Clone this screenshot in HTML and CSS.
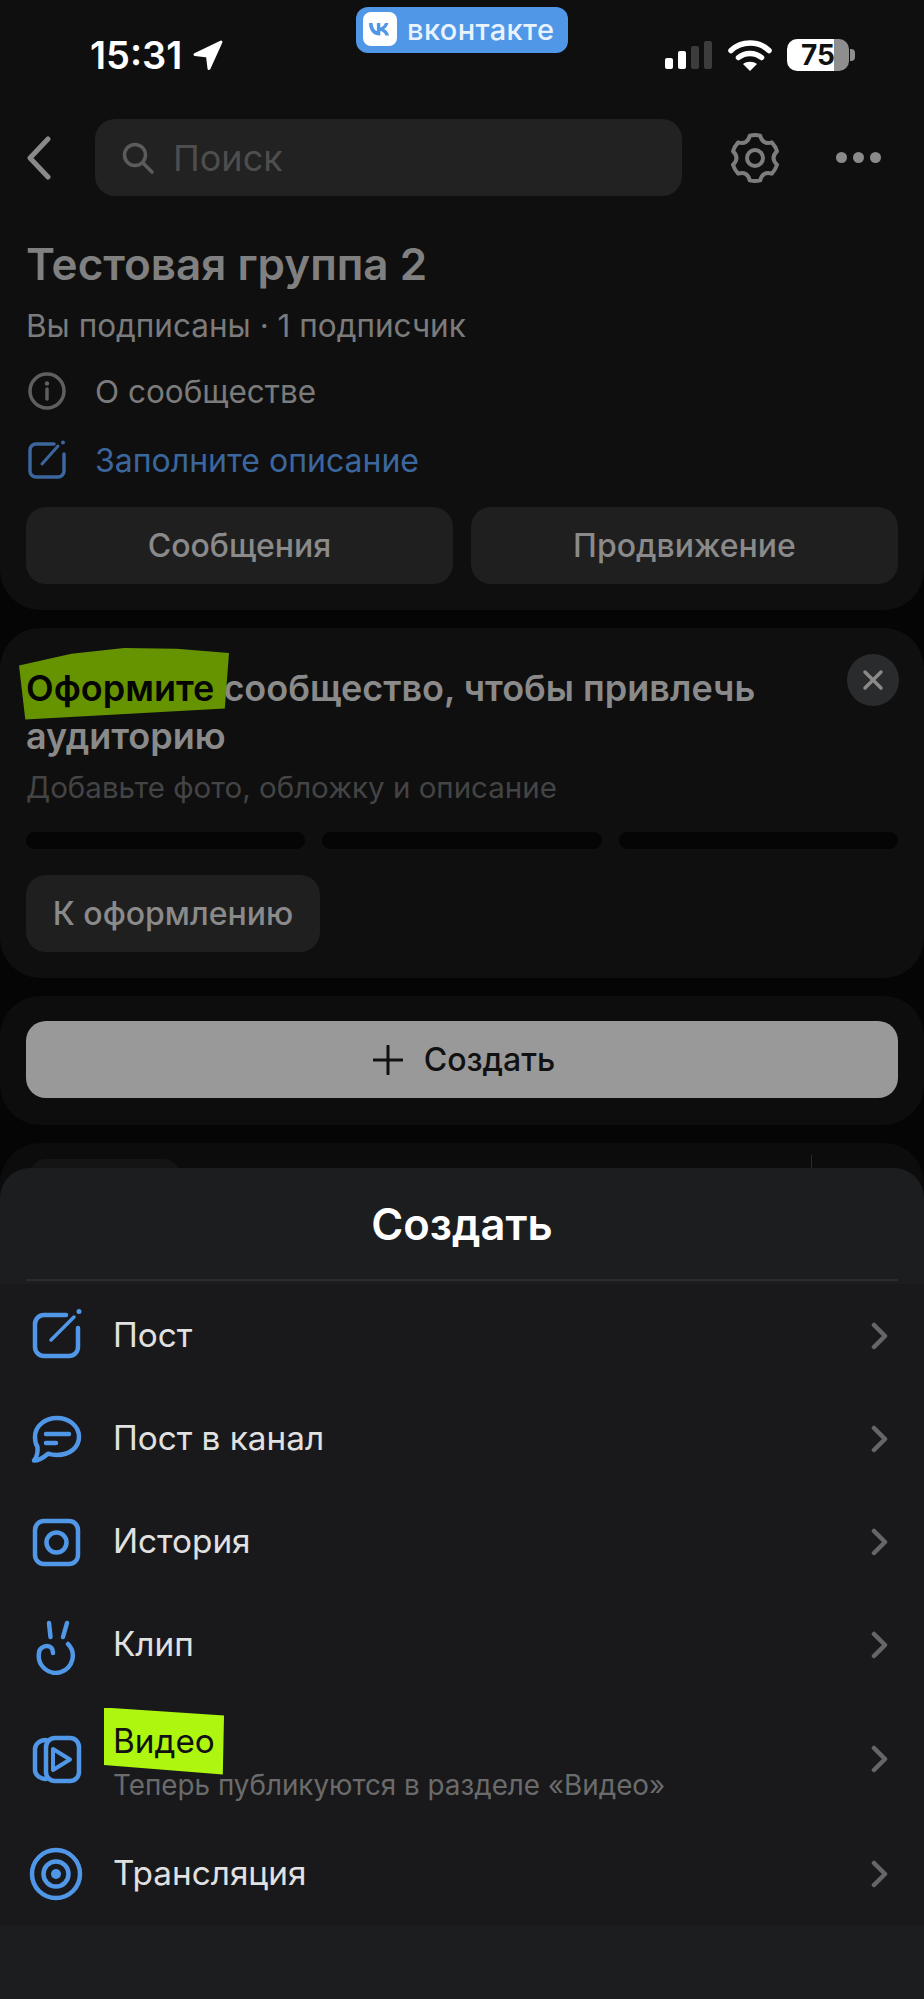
FILE: index.html
```html
<!DOCTYPE html>
<html lang="ru">

<head>
    <meta charset="UTF-8">
    <meta name="viewport" content="width=device-width, initial-scale=1.0">
    <title>Тестовая группа 2</title>
    <link rel="stylesheet" href="styles.css">
</head>

<body>
    <div class="record-badge">
        <svg class="vk-logo" viewBox="0 0 34 34">
            <rect width="34" height="34" rx="8" fill="#fff" />
            <path d="M6 11h3.6c.2 5 2.300 7.400 4.300 8V11h3.400v4.400c2-.2 4-2.300 4.700-4.400h3.400c-.6 3-2.800 5.200-4.400 6.100 1.600.8 4.100 2.700 5.100 6.400h-3.700c-.8-2.400-2.700-4.300-5.100-4.500v4.500h-.4C10.200 23.500 6.200 18.900 6 11z" fill="#5097e8" />
        </svg>
        <span>вконтакте</span>
    </div>

    <section class="card card-top">
        <div class="status-bar">
            <div class="status-time">
                <span>15:31</span>
                <svg class="location" viewBox="0 0 32 32">
                    <path d="M29 3 3 15.500l12.500 1.500L17 29.500z" fill="#fff" stroke="#fff" stroke-width="3" stroke-linejoin="round" />
                </svg>
            </div>
            <div class="status-right">
                <div class="signal">
                    <i class="bar bar-1"></i>
                    <i class="bar bar-2"></i>
                    <i class="bar bar-3"></i>
                    <i class="bar bar-4"></i>
                </div>
                <svg class="wifi" viewBox="0 0 44 32">
                    <path d="M3 11.500C13.500 1.500 30.500 1.500 41 11.500" fill="none" stroke="#fff" stroke-width="5.500" stroke-linecap="round" />
                    <path d="M10.500 18.500c6.500-5.500 16.500-5.500 23 0" fill="none" stroke="#fff" stroke-width="5.500" stroke-linecap="round" />
                    <path d="M15 25c4-3 10-3 14 0l-7 7z" fill="#fff" />
                </svg>
                <div class="battery">75</div>
                <i class="battery-nub"></i>
            </div>
        </div>

        <div class="top-nav">
            <svg class="back" viewBox="0 0 26 44">
                <path d="M22 3 4 22l18 19" fill="none" stroke="#8a8a8a" stroke-width="5" stroke-linecap="round" stroke-linejoin="round" />
            </svg>
            <div class="search">
                <svg class="search-icon" viewBox="0 0 32 32">
                    <circle cx="13" cy="13" r="10.500" fill="none" stroke="#5c5c5c" stroke-width="3.500" />
                    <path d="m21 21 9 9" stroke="#5c5c5c" stroke-width="3.500" stroke-linecap="round" />
                </svg>
                <span>Поиск</span>
            </div>
            <svg class="gear" viewBox="0 0 54 54">
                <path d="M21.830 4.590A23 23 0 0 1 32.170 4.590Q34.500 14.010 43.820 11.310A23 23 0 0 1 48.990 20.280Q42 27 48.990 33.720A23 23 0 0 1 43.820 42.690Q34.500 39.990 32.170 49.410A23 23 0 0 1 21.830 49.410Q19.500 39.990 10.180 42.690A23 23 0 0 1 5.010 33.720Q12 27 5.010 20.280A23 23 0 0 1 10.180 11.310Q19.500 14.010 21.830 4.590Z" fill="none" stroke="#7d7d7d" stroke-width="4" stroke-linejoin="round" />
                <circle cx="27" cy="27" r="8" fill="none" stroke="#7d7d7d" stroke-width="4" />
            </svg>
            <div class="dots"><i></i><i></i><i></i></div>
        </div>

        <h1 class="group-name">Тестовая группа 2</h1>
        <p class="group-meta">Вы подписаны · 1 подписчик</p>

        <div class="info-row">
            <svg class="info-icon" viewBox="0 0 40 40">
                <circle cx="20" cy="20" r="17" fill="none" stroke="#5f5f5f" stroke-width="3.500" />
                <circle cx="20" cy="12.500" r="2.200" fill="#5f5f5f" />
                <path d="M20 18v10" stroke="#5f5f5f" stroke-width="3.500" stroke-linecap="round" />
            </svg>
            <span>О сообществе</span>
        </div>
        <div class="info-row info-link">
            <svg class="info-icon" viewBox="0 0 40 40">
                <path d="M27 4H9a6 6 0 0 0-6 6v21a6 6 0 0 0 6 6h22a6 6 0 0 0 6-6V14" fill="none" stroke="#3c679e" stroke-width="3.500" stroke-linecap="round" />
                <path d="m15 24 16-18" stroke="#3c679e" stroke-width="3" stroke-linecap="round" />
                <circle cx="36" cy="2.500" r="2" fill="#3c679e" />
            </svg>
            <span>Заполните описание</span>
        </div>

        <div class="actions">
            <div class="btn">Сообщения</div>
            <div class="btn">Продвижение</div>
        </div>
    </section>

    <section class="card card-promo">
        <div class="close-btn">
            <svg viewBox="0 0 24 24">
                <path d="m4 4 16 16M20 4 4 20" stroke="#8a8a8a" stroke-width="3.500" stroke-linecap="round" />
            </svg>
        </div>
        <h2 class="promo-title"><span class="hl-green">Оформите</span> сообщество, чтобы привлечь аудиторию</h2>
        <p class="promo-sub">Добавьте фото, обложку и описание</p>
        <div class="progress"><i></i><i></i><i></i></div>
        <div class="btn btn-small">К оформлению</div>
    </section>

    <section class="card card-create">
        <div class="create-btn">
            <svg viewBox="0 0 30 30">
                <path d="M15 1v28M1 15h28" stroke="#111" stroke-width="3" stroke-linecap="round" />
            </svg>
            <span>Создать</span>
        </div>
    </section>

    <section class="card card-hidden">
        <div class="hidden-tab"></div>
        <div class="hidden-line"></div>
    </section>

    <div class="sheet">
        <div class="sheet-title">Создать</div>
        <ul class="sheet-list">
            <li class="sheet-row">
                <svg class="row-icon" viewBox="0 0 60 60">
                    <path d="M40 9H18a9 9 0 0 0-9 9v23a9 9 0 0 0 9 9h25a9 9 0 0 0 9-9V22" />
                    <path d="M25 34 48 11" stroke-width="3.500" />
                    <circle class="solid" cx="53" cy="5.500" r="2.500" />
                </svg>
                <span class="row-name">Пост</span>
                <svg class="chevron" viewBox="0 0 18 28"><path d="m3 3 11 11L3 25" /></svg>
            </li>
            <li class="sheet-row">
                <svg class="row-icon" viewBox="0 0 60 60">
                    <path d="M31 9c12 0 22 8 22 19s-10 18-22 18c-3 0-6-.4-9-1.300-5 4.300-10 6.800-14 6.800 3-3.500 4-7.500 3.500-13.500C9.500 35 9 31 9 28 9 17 19 9 31 9z" stroke-linejoin="round" />
                    <path d="M20 25h23M20 34h10" />
                </svg>
                <span class="row-name">Пост в канал</span>
                <svg class="chevron" viewBox="0 0 18 28"><path d="m3 3 11 11L3 25" /></svg>
            </li>
            <li class="sheet-row">
                <svg class="row-icon" viewBox="0 0 60 60">
                    <rect x="9" y="9" width="43" height="43" rx="9" />
                    <circle cx="30.500" cy="30.500" r="10" />
                </svg>
                <span class="row-name">История</span>
                <svg class="chevron" viewBox="0 0 18 28"><path d="m3 3 11 11L3 25" /></svg>
            </li>
            <li class="sheet-row">
                <svg class="row-icon" viewBox="0 0 60 60">
                    <path d="m23 8 1.500 14M41 8l-4 14" />
                    <path d="M42 29A17 17 0 1 1 13 38c0-4 4-7 8-7s6 3 6 7" />
                </svg>
                <span class="row-name">Клип</span>
                <svg class="chevron" viewBox="0 0 18 28"><path d="m3 3 11 11L3 25" /></svg>
            </li>
            <li class="sheet-row sheet-row-tall">
                <svg class="row-icon" viewBox="0 0 60 60">
                    <rect x="20" y="9" width="33" height="43" rx="9" />
                    <path d="M20 11c-6 0-11 4-11 9v21c0 5 5 9 11 9" />
                    <path d="m27 20 17 10.500L27 41z" stroke-width="4" stroke-linejoin="round" />
                </svg>
                <div class="row-text">
                    <span class="row-name"><span class="hl-lime">Видео</span></span>
                    <span class="row-sub">Теперь публикуются в разделе «Видео»</span>
                </div>
                <svg class="chevron" viewBox="0 0 18 28"><path d="m3 3 11 11L3 25" /></svg>
            </li>
            <li class="sheet-row">
                <svg class="row-icon" viewBox="0 0 60 60">
                    <circle cx="30" cy="30" r="24" />
                    <circle cx="30" cy="30" r="12.500" />
                    <circle class="solid" cx="30" cy="30" r="5" />
                </svg>
                <span class="row-name">Трансляция</span>
                <svg class="chevron" viewBox="0 0 18 28"><path d="m3 3 11 11L3 25" /></svg>
            </li>
        </ul>
    </div>
</body>

</html>
```

FILE: styles.css
```css
* {
    box-sizing: border-box;
}

html,
body {
    margin: 0;
    padding: 0;
}

body {
    position: relative;
    width: 924px;
    height: 1999px;
    overflow: hidden;
    background-color: #050505;
    font-family: Inter, "Liberation Sans", sans-serif;
    color: #8a8a8a;
}

h1,
h2,
p,
ul {
    margin: 0;
    padding: 0;
}

.card {
    background-color: #0f0f10;
    border-radius: 40px;
    padding: 0 26px;
    margin-bottom: 18px;
}

/* screen recorder badge */
.record-badge {
    position: absolute;
    left: 356px;
    top: 7px;
    width: 212px;
    height: 46px;
    display: flex;
    align-items: center;
    gap: 10px;
    padding-left: 7px;
    padding-bottom: 2px;
    background-color: #5097e8;
    border-radius: 12px;
    color: #e9f3fe;
    font-size: 29px;
    font-weight: 500;
    letter-spacing: 0.4px;
}

.vk-logo {
    width: 34px;
    height: 34px;
}

/* status bar */
.card-top {
    height: 610px;
    border-radius: 0 0 40px 40px;
}

.status-bar {
    height: 110px;
    display: flex;
    justify-content: space-between;
    align-items: center;
    padding-left: 64px;
}

.status-time {
    display: flex;
    align-items: center;
    gap: 10px;
    color: #fff;
    font-size: 38px;
    font-weight: 600;
}

.location {
    width: 32px;
    height: 32px;
}

.status-right {
    display: flex;
    align-items: center;
    margin-right: 43px;
}

.signal {
    display: flex;
    align-items: flex-end;
    gap: 5px;
    height: 28px;
    margin-right: 16px;
}

.bar {
    width: 8px;
    border-radius: 2px;
    background-color: #fff;
}

.bar-1 {
    height: 11px;
}

.bar-2 {
    height: 18px;
}

.bar-3 {
    height: 23px;
    background-color: #3c3c3c;
}

.bar-4 {
    height: 28px;
    background-color: #3c3c3c;
}

.wifi {
    width: 44px;
    height: 32px;
    margin-right: 15px;
}

.battery {
    width: 62px;
    height: 32px;
    border-radius: 10px;
    background: linear-gradient(to right, #fff 47px, #8e8e8e 47px);
    color: #111;
    font-size: 28px;
    font-weight: 700;
    line-height: 32px;
    text-align: center;
}

.battery-nub {
    width: 5px;
    height: 12px;
    margin-left: 1px;
    border-radius: 0 4px 4px 0;
    background-color: #8e8e8e;
}

/* top nav */
.top-nav {
    display: flex;
    align-items: center;
    height: 77px;
    margin-top: 9px;
}

.back {
    width: 26px;
    height: 44px;
    margin-right: 43px;
}

.search {
    width: 587px;
    height: 77px;
    display: flex;
    align-items: center;
    gap: 19px;
    padding-left: 27px;
    background-color: #222223;
    border-radius: 20px;
    font-size: 36px;
    color: #4e4e4e;
}

.search-icon {
    width: 32px;
    height: 32px;
}

.gear {
    width: 54px;
    height: 54px;
    margin-left: 46px;
}

.dots {
    display: flex;
    gap: 6px;
    margin-left: 54px;
}

.dots i {
    width: 11px;
    height: 11px;
    border-radius: 50%;
    background-color: #8a8a8a;
}

/* group info */
.group-name {
    margin-top: 40px;
    font-size: 44px;
    font-weight: 600;
    line-height: 56px;
    color: #808080;
}

.group-meta {
    margin-top: 15px;
    font-size: 31.500px;
    line-height: 38px;
    color: #7b7b7b;
}

.info-row {
    display: flex;
    align-items: center;
    gap: 28px;
    height: 40px;
    margin-top: 26px;
    padding-left: 1px;
    font-size: 31.500px;
    color: #7b7b7b;
}

.info-link {
    margin-top: 29px;
    font-size: 32px;
    color: #3c679e;
}

.info-icon {
    width: 40px;
    height: 40px;
}

.actions {
    display: flex;
    gap: 18px;
    margin-top: 27px;
}

.btn {
    flex: 1;
    height: 77px;
    display: flex;
    align-items: center;
    justify-content: center;
    background-color: #1f1f20;
    border-radius: 20px;
    font-size: 32px;
    font-weight: 500;
    color: #8a8a8a;
}

/* promo card */
.card-promo {
    position: relative;
    height: 350px;
    padding-top: 36px;
}

.close-btn {
    position: absolute;
    right: 25px;
    top: 26px;
    width: 52px;
    height: 52px;
    display: flex;
    align-items: center;
    justify-content: center;
    border-radius: 50%;
    background-color: #2a2b2d;
}

.close-btn svg {
    width: 24px;
    height: 24px;
}

.promo-title {
    padding-right: 90px;
    font-size: 36px;
    font-weight: 600;
    line-height: 48px;
    color: #8a8a8a;
}

.hl-green {
    position: relative;
    z-index: 0;
    color: #050505;
}

.hl-green::before {
    content: "";
    position: absolute;
    z-index: -1;
    left: -7px;
    top: -18px;
    width: 210px;
    height: 73px;
    background-color: #669400;
    clip-path: polygon(0 24%, 25% 8%, 50% 0, 75% 1%, 100% 7%, 98% 83%, 3% 98%);
}

.promo-sub {
    margin-top: 8px;
    font-size: 29.500px;
    line-height: 38px;
    color: #444;
}

.progress {
    display: flex;
    gap: 17px;
    margin-top: 26px;
}

.progress i {
    flex: 1;
    height: 17px;
    border-radius: 9px;
    background-color: #050505;
}

.btn-small {
    flex: none;
    width: 294px;
    margin-top: 26px;
}

/* create card */
.card-create {
    height: 129px;
    padding-top: 25px;
    background-color: #0d0d0e;
}

.create-btn {
    height: 77px;
    display: flex;
    align-items: center;
    justify-content: center;
    gap: 21px;
    padding-left: 4px;
    background-color: #999;
    border-radius: 20px;
    font-size: 32px;
    font-weight: 500;
    color: #111;
}

.create-btn svg {
    width: 30px;
    height: 30px;
}

/* card under the sheet */
.card-hidden {
    position: relative;
    height: 200px;
    padding-top: 16px;
    background-color: #0c0c0d;
}

.hidden-tab {
    width: 150px;
    height: 60px;
    margin-left: 4px;
    border-radius: 16px;
    background-color: #141415;
}

.hidden-line {
    position: absolute;
    left: 811px;
    top: 12px;
    width: 1px;
    height: 40px;
    background-color: #2a2a2a;
}

/* bottom sheet */
.sheet {
    position: absolute;
    left: 0;
    right: 0;
    top: 1168px;
    bottom: 0;
    background-color: #1c1d1f;
    border-radius: 30px 30px 0 0;
}

.sheet-title {
    height: 113px;
    margin: 0 26px;
    display: flex;
    align-items: center;
    justify-content: center;
    border-bottom: 2px solid #2a2b2d;
    font-size: 43.500px;
    font-weight: 600;
    color: #fff;
}

.sheet-list {
    list-style-type: none;
    margin-top: 3px;
    background-color: #19191b;
}

.sheet-row {
    height: 103px;
    display: flex;
    align-items: center;
    padding-left: 26px;
    padding-right: 35px;
}

.sheet-row-tall {
    height: 126px;
}

.row-icon {
    width: 60px;
    height: 60px;
    margin-right: 27px;
    fill: none;
    stroke: #5097e8;
    stroke-width: 4.5;
    stroke-linecap: round;
}

.row-icon .solid {
    fill: #5097e8;
    stroke: none;
}

.row-name {
    margin-bottom: 2px;
    font-size: 33.300px;
    color: #e1e1e1;
}

.row-text {
    display: flex;
    flex-direction: column;
    gap: 5px;
    margin-top: 4px;
}

.row-sub {
    font-size: 27.800px;
    color: #6b6b6b;
}

.hl-lime {
    position: relative;
    z-index: 0;
    color: #111;
}

.hl-lime::before {
    content: "";
    position: absolute;
    z-index: -1;
    left: -9px;
    top: -13px;
    width: 120px;
    height: 67px;
    background-color: #aef60f;
    clip-path: polygon(0 0, 100% 12%, 99% 100%, 0 86%);
}

.chevron {
    width: 18px;
    height: 28px;
    margin-left: auto;
    fill: none;
    stroke: #666;
    stroke-width: 4.5;
    stroke-linecap: round;
    stroke-linejoin: round;
}
```
